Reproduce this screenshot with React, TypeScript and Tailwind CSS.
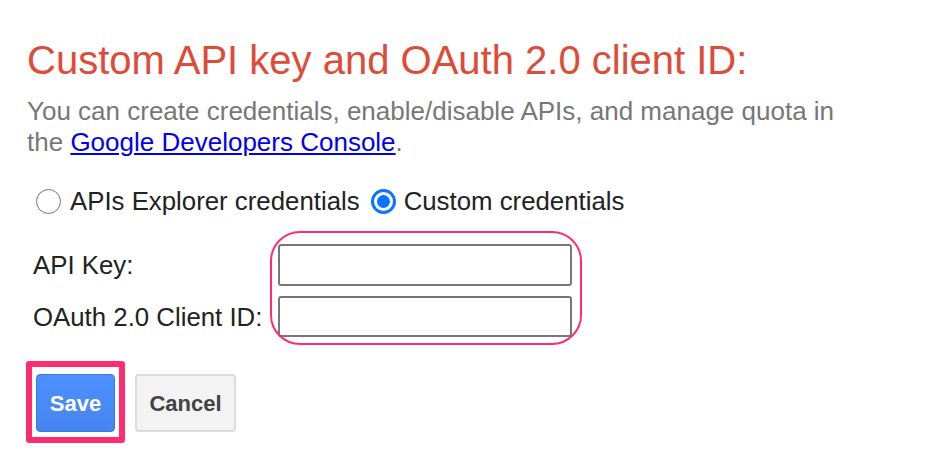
import React from "react";

const font = { fontFamily: '"Liberation Sans", Arial, sans-serif' };

export default function App() {
  return (
    <div className="w-[948px] h-[468px] bg-white pl-[27px] pt-[37px]" style={font}>
      <h1 className="text-[40px] leading-[46px] text-[#dd4b39] font-normal">
        Custom API key and OAuth 2.0 client ID:
      </h1>
      <p className="mt-[13px] text-[26px] leading-[31px] text-[#777]">
        You can create credentials, enable/disable APIs, and manage quota in
        <br />
        the{" "}
        <a href="#" className="text-[#0000ee] underline">
          Google Developers Console
        </a>
        .
      </p>

      {/* credential source */}
      <div className="mt-[28px] ml-[9px] flex items-center text-[25.8px] leading-[30px] text-[#222]">
        <span className="w-[25px] h-[25px] rounded-full border-[1.5px] border-[#767676] bg-white" />
        <span className="ml-[9px]">APIs Explorer credentials</span>
        <span className="ml-[11px] w-[25px] h-[25px] rounded-full border-[3px] border-[#0a74ff] flex items-center justify-center">
          <span className="w-[13px] h-[13px] rounded-full bg-[#0a74ff]" />
        </span>
        <span className="ml-[8px]">Custom credentials</span>
      </div>

      {/* fields */}
      <div className="mt-[28px] ml-[6px] flex">
        <div className="w-[245px] flex flex-col gap-[10px] text-[25.8px] leading-[30px] text-[#222]">
          <label className="h-[42px] flex items-center">API Key:</label>
          <label className="h-[41px] flex items-center">OAuth 2.0 Client ID:</label>
        </div>
        <div className="relative flex flex-col gap-[10px]">
          <input className="w-[294px] h-[42px] border-2 border-[#777] rounded-[3px] bg-white" />
          <input className="w-[294px] h-[41px] border-2 border-[#777] rounded-[3px] bg-white" />
          <div className="absolute left-[-8px] top-[-13px] w-[312px] h-[114px] border-2 border-[#ff2d6f] rounded-[30px]" />
        </div>
      </div>

      {/* actions */}
      <div className="mt-[24px] flex items-start">
        <div className="-ml-[1px] px-[4px] pt-[7px] pb-[5px] border-[6px] border-[#ff2d6f] rounded-[3px]">
          <button className="block w-[79px] h-[58px] rounded-[4px] border border-[#3079ed] bg-gradient-to-b from-[#4d90fe] to-[#4585ee] text-white text-[22px] font-bold">
            Save
          </button>
        </div>
        <button className="mt-[13px] ml-[10px] w-[101px] h-[58px] rounded-[4px] border-2 border-[#dcdcdc] bg-[#f3f3f3] text-[#444] text-[22px] font-bold">
          Cancel
        </button>
      </div>
    </div>
  );
}
